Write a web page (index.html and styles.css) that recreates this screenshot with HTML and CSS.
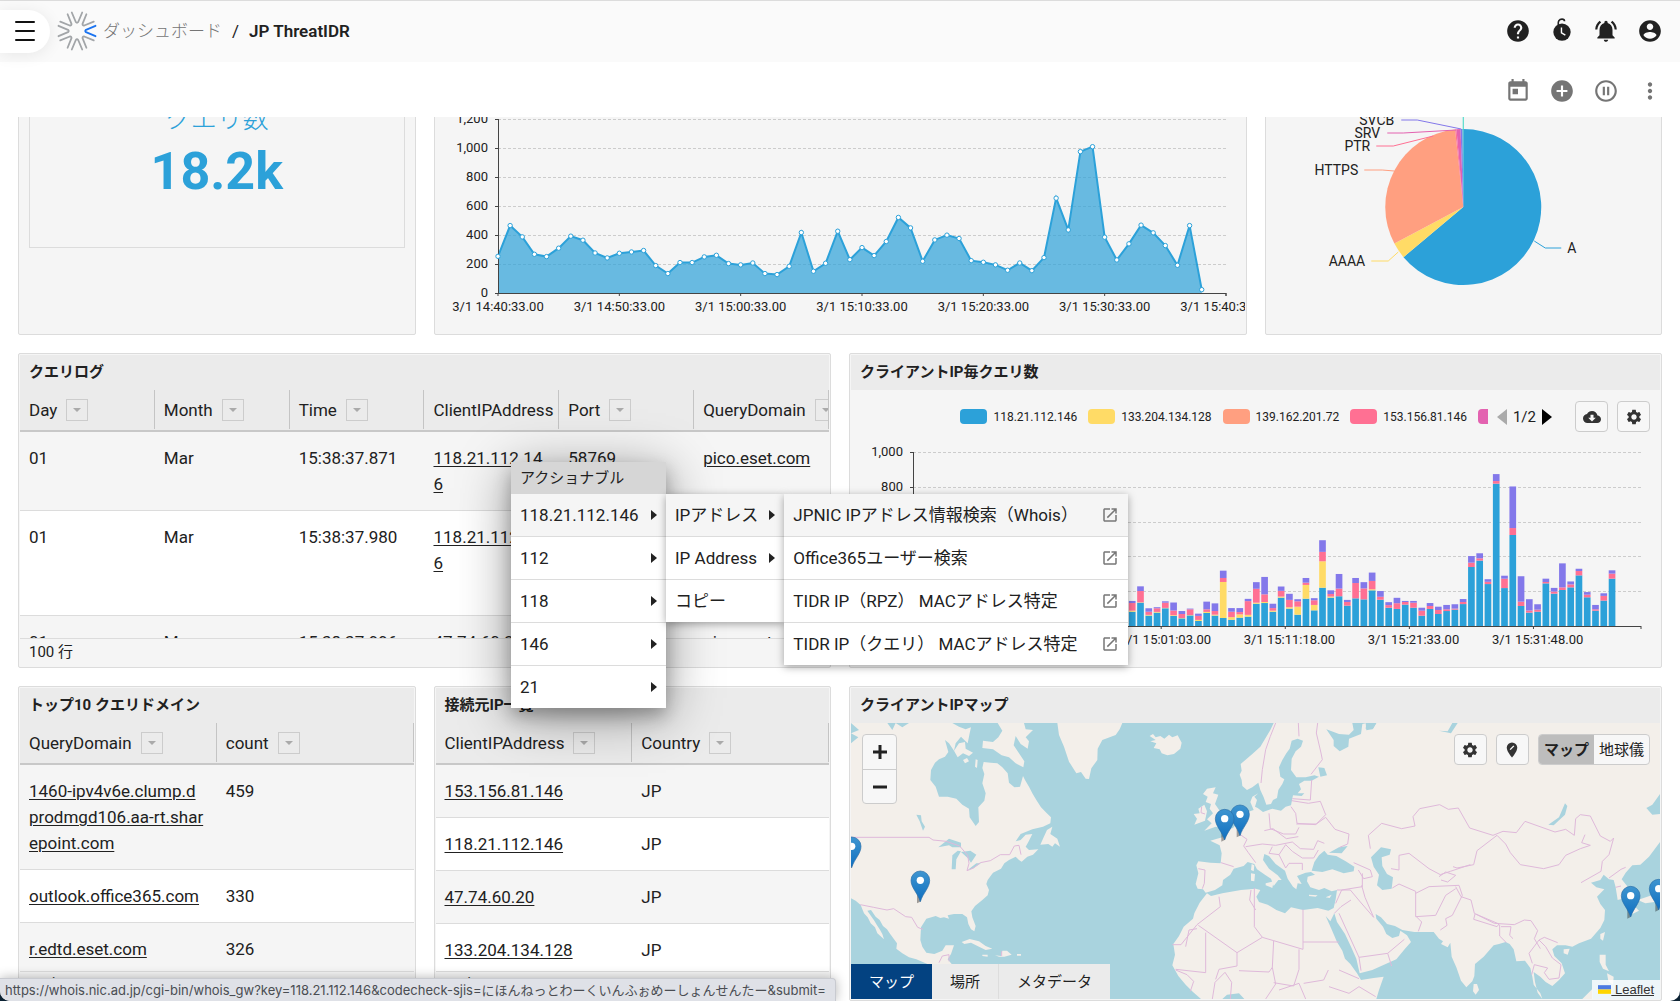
FILE: index.html
```html
<!DOCTYPE html>
<html lang="ja">
<head>
    <meta charset="UTF-8">
    <meta name="viewport" content="width=device-width, initial-scale=1.0">
    <title>ダッシュボード / JP ThreatIDR</title>
    <link rel="stylesheet" href="styles.css">
</head>
<body>
    <!-- Shared icon shapes -->
    <svg class="defs" aria-hidden="true">
        <symbol id="i-gear" viewBox="0 0 24 24"><path d="M19.14 12.94c.04-.3.06-.61.06-.94 0-.32-.02-.64-.07-.94l2.03-1.58c.18-.14.23-.41.12-.61l-1.92-3.32c-.12-.22-.37-.29-.59-.22l-2.39.96c-.5-.38-1.03-.7-1.62-.94l-.36-2.54c-.04-.24-.24-.41-.48-.41h-3.84c-.24 0-.43.17-.47.41l-.36 2.54c-.59.24-1.13.57-1.62.94l-2.39-.96c-.22-.08-.47 0-.59.22L2.74 8.87c-.12.21-.08.47.12.61l2.03 1.58c-.05.3-.09.63-.09.94s.02.64.07.94l-2.03 1.58c-.18.14-.23.41-.12.61l1.92 3.32c.12.22.37.29.59.22l2.39-.96c.5.38 1.03.7 1.62.94l.36 2.54c.05.24.24.41.48.41h3.84c.24 0 .44-.17.47-.41l.36-2.54c.59-.24 1.13-.56 1.62-.94l2.39.96c.22.08.47 0 .59-.22l1.92-3.32c.12-.22.07-.47-.12-.61l-2.01-1.58zM12 15.6c-1.98 0-3.6-1.62-3.6-3.6s1.62-3.6 3.6-3.6 3.6 1.62 3.6 3.6-1.62 3.6-3.6 3.6z"/></symbol>
        <symbol id="i-open" viewBox="0 0 24 24"><path d="M19 19H5V5h7V3H5c-1.11 0-2 .9-2 2v14c0 1.1.89 2 2 2h14c1.1 0 2-.9 2-2v-7h-2v7zM14 3v2h3.59l-9.83 9.83 1.41 1.41L19 6.41V10h2V3h-7z"/></symbol>
        <symbol id="i-arrow" viewBox="0 0 6 10"><path d="M0 0l6 5-6 5z"/></symbol>
        <symbol id="i-down" viewBox="0 0 8 4"><path d="M0 0h8L4 4z"/></symbol>
    </svg>

    <header class="topbar">
        <button class="menu-toggle" aria-label="メニュー">
            <svg width="20" height="20" viewBox="0 0 20 20"><path d="M1 1h18M1 10h18M1 19h18" stroke="#111" stroke-width="2" stroke-linecap="round"/></svg>
        </button>
        <svg class="logo" width="40" height="40" viewBox="-20 -20 40 40" fill="none" stroke="#a2a5a8" stroke-width="1.8" stroke-linecap="round" stroke-linejoin="round">
            <path id="petal" stroke="#1a73f0" d="M18.5-5.2L9-1.2Q7.5 0 9 1.2L18.5 5.2"/>
            <g id="petals"></g>
        </svg>
        <nav class="breadcrumb">
            <a href="#">ダッシュボード</a>
            <span>/</span>
            <strong>JP ThreatIDR</strong>
        </nav>
        <div class="icon-row">
            <button class="icon-button" aria-label="ヘルプ"><svg viewBox="0 0 24 24"><path d="M12 2C6.48 2 2 6.48 2 12s4.48 10 10 10 10-4.48 10-10S17.52 2 12 2zm1 17h-2v-2h2v2zm2.07-7.75l-.9.92C13.45 12.9 13 13.5 13 15h-2v-.5c0-1.1.45-2.1 1.17-2.83l1.24-1.26c.37-.36.59-.86.59-1.41 0-1.1-.9-2-2-2s-2 .9-2 2H8c0-2.21 1.79-4 4-4s4 1.79 4 4c0 .88-.36 1.68-.93 2.25z"/></svg></button>
            <button class="icon-button" aria-label="タイマー"><svg viewBox="0 0 24 24"><circle cx="12" cy="13" r="8"/><path d="M8.6 6.500C8 3 9.500 1 12 1c1.500 0 2.300.7 2.300 1.900" fill="none" stroke="#212121" stroke-width="1.600"/><path d="M11.500 8.800v4.800l3.600 2.200" fill="none" stroke="#fff" stroke-width="1.300"/></svg></button>
            <button class="icon-button" aria-label="通知"><svg viewBox="0 0 24 24"><path d="M7.580 4.080L6.150 2.650C3.750 4.480 2.170 7.300 2.030 10.500h2c.15-2.650 1.510-4.970 3.550-6.420zm12.390 6.420h2c-.15-3.200-1.730-6.020-4.120-7.850l-1.420 1.430c2.020 1.450 3.390 3.770 3.540 6.420zM18 11c0-3.070-1.640-5.640-4.500-6.320V4c0-.83-.67-1.500-1.500-1.500s-1.500.67-1.500 1.500v.68C7.630 5.360 6 7.920 6 11v5l-2 2v1h16v-1l-2-2v-5zm-6 11c.14 0 .27-.01.4-.04.65-.14 1.180-.58 1.440-1.180.1-.24.15-.5.15-.78h-4c.01 1.100.9 2 2.010 2z"/></svg></button>
            <button class="icon-button" aria-label="アカウント"><svg viewBox="0 0 24 24"><path d="M12 2C6.480 2 2 6.480 2 12s4.480 10 10 10 10-4.480 10-10S17.520 2 12 2zm0 3c1.660 0 3 1.340 3 3s-1.340 3-3 3-3-1.340-3-3 1.340-3 3-3zm0 14.200c-2.500 0-4.710-1.280-6-3.220.03-1.990 4-3.080 6-3.080 1.990 0 5.970 1.090 6 3.080-1.290 1.940-3.500 3.220-6 3.220z"/></svg></button>
        </div>
    </header>

    <div class="toolbar">
        <div class="icon-row muted">
            <button class="icon-button" aria-label="期間"><svg viewBox="0 0 24 24"><path d="M19 3h-1V1h-2v2H8V1H6v2H5c-1.110 0-1.990.9-1.990 2L3 19c0 1.100.89 2 2 2h14c1.100 0 2-.9 2-2V5c0-1.100-.9-2-2-2zm0 16H5V8h14v11zM7 10h5v5H7z"/></svg></button>
            <button class="icon-button" aria-label="追加"><svg viewBox="0 0 24 24"><path d="M12 2C6.480 2 2 6.480 2 12s4.480 10 10 10 10-4.480 10-10S17.520 2 12 2zm5 11h-4v4h-2v-4H7v-2h4V7h2v4h4v2z"/></svg></button>
            <button class="icon-button" aria-label="一時停止"><svg viewBox="0 0 24 24"><path d="M9 16h2V8H9v8zm3-14C6.480 2 2 6.480 2 12s4.480 10 10 10 10-4.480 10-10S17.520 2 12 2zm0 18c-4.410 0-8-3.590-8-8s3.590-8 8-8 8 3.590 8 8-3.590 8-8 8zm1-4h2V8h-2v8z"/></svg></button>
            <button class="icon-button" aria-label="その他"><svg viewBox="0 0 24 24"><path d="M12 8c1.100 0 2-.9 2-2s-.9-2-2-2-2 .9-2 2 .9 2 2 2zm0 2c-1.100 0-2 .9-2 2s.9 2 2 2 2-.9 2-2-.9-2-2-2zm0 6c-1.100 0-2 .9-2 2s.9 2 2 2 2-.9 2-2-.9-2-2-2z"/></svg></button>
        </div>
    </div>

    <main class="dashboard" id="dashboard">
        <section class="card">
            <h2>クエリ数</h2>
            <div class="metric">
                <span class="metric-label">クエリ数</span>
                <span class="metric-value">18.2k</span>
            </div>
        </section>

        <section class="card wide">
            <h2>クエリ数</h2>
            <svg class="chart" id="areaChart"></svg>
        </section>

        <section class="card">
            <h2>クエリ数</h2>
            <svg class="chart pie" viewBox="0 0 393 276" preserveAspectRatio="xMidYMax meet">
                <g id="pieSlices"></g>
                <g fill="none">
                    <path stroke="#2ca1d9" d="M267 184l11 7h16"/>
                    <path stroke="#ffdb66" d="M131 195l-10 9h-17"/>
                    <path stroke="#ff9f80" d="M127 114l-12-1H97"/>
                    <path stroke="#ff7093" d="M166 79l-40 10h-17"/>
                    <path stroke="#e362b0" d="M189 73l-53 3h-16"/>
                    <path stroke="#8378ea" d="M194 72l-44-9h-16"/>
                    <path stroke="#38d6c4" d="M196 73V40"/>
                </g>
                <g class="pie-labels">
                    <text x="300" y="196">A</text>
                    <text x="98" y="209" text-anchor="end">AAAA</text>
                    <text x="91" y="118" text-anchor="end">HTTPS</text>
                    <text x="103" y="94" text-anchor="end">PTR</text>
                    <text x="113" y="81" text-anchor="end">SRV</text>
                    <text x="127" y="68" text-anchor="end">SVCB</text>
                </g>
            </svg>
        </section>

        <section class="card wide">
            <h2>クエリログ</h2>
            <div class="table-scroll">
                <table>
                    <thead>
                        <tr>
                            <th><div>Day<button aria-label="Day"><svg><use href="#i-down"/></svg></button></div></th>
                            <th><div>Month<button aria-label="Month"><svg><use href="#i-down"/></svg></button></div></th>
                            <th><div>Time<button aria-label="Time"><svg><use href="#i-down"/></svg></button></div></th>
                            <th><div>ClientIPAddress<button aria-label="ClientIPAddress"><svg><use href="#i-down"/></svg></button></div></th>
                            <th><div>Port<button aria-label="Port"><svg><use href="#i-down"/></svg></button></div></th>
                            <th><div>QueryDomain<button aria-label="QueryDomain"><svg><use href="#i-down"/></svg></button></div></th>
                        </tr>
                    </thead>
                    <tbody>
                        <tr><td>01</td><td>Mar</td><td>15:38:37.871</td><td><a href="#">118.21.112.146</a></td><td>58769</td><td><a href="#">pico.eset.com</a></td></tr>
                        <tr><td>01</td><td>Mar</td><td>15:38:37.980</td><td><a href="#">118.21.112.146</a></td><td>58770</td><td><a href="#">prodmgd106.aa-rt.sharepoint.com</a></td></tr>
                        <tr><td>01</td><td>Mar</td><td>15:38:37.996</td><td><a href="#">47.74.60.20</a></td><td>58771</td><td><a href="#">pico.eset.com</a></td></tr>
                    </tbody>
                </table>
            </div>
            <footer>100 行</footer>
        </section>

        <section class="card wide">
            <h2>クライアントIP毎クエリ数</h2>
            <div class="chart-head">
                <ul class="legend">
                    <li class="c-blue">118.21.112.146</li>
                    <li class="c-yellow">133.204.134.128</li>
                    <li class="c-orange">139.162.201.72</li>
                    <li class="c-pink">153.156.81.146</li>
                    <li class="c-magenta cut"></li>
                </ul>
                <div class="pager">
                    <button class="prev" aria-label="前へ" disabled><svg viewBox="0 0 10 16"><path d="M10 0v16L0 8z"/></svg></button>
                    <span>1/2</span>
                    <button aria-label="次へ"><svg viewBox="0 0 10 16"><path d="M0 0v16l10-8z"/></svg></button>
                </div>
                <button class="tool" aria-label="ダウンロード"><svg viewBox="0 0 24 24"><path d="M19.350 10.040C18.670 6.590 15.640 4 12 4 9.110 4 6.600 5.640 5.350 8.040 2.340 8.360 0 10.910 0 14c0 3.310 2.690 6 6 6h13c2.760 0 5-2.240 5-5 0-2.640-2.050-4.780-4.650-4.960zM17 13l-5 5-5-5h3V9h4v4h3z"/></svg></button>
                <button class="tool" aria-label="設定"><svg><use href="#i-gear"/></svg></button>
            </div>
            <svg class="chart" id="barChart"></svg>
        </section>

        <section class="card">
            <h2>トップ10 クエリドメイン</h2>
            <div class="table-scroll">
                <table>
                    <thead>
                        <tr>
                            <th><div>QueryDomain<button aria-label="QueryDomain"><svg><use href="#i-down"/></svg></button></div></th>
                            <th><div>count<button aria-label="count"><svg><use href="#i-down"/></svg></button></div></th>
                        </tr>
                    </thead>
                    <tbody>
                        <tr><td><a href="#">1460-ipv4v6e.clump.d<br>prodmgd106.aa-rt.sharepoint.com</a></td><td>459</td></tr>
                        <tr><td><a href="#">outlook.office365.com</a></td><td>330</td></tr>
                        <tr><td><a href="#">r.edtd.eset.com</a></td><td>326</td></tr>
                    </tbody>
                </table>
            </div>
            <footer>10 行</footer>
        </section>

        <section class="card">
            <h2>接続元IP一覧</h2>
            <div class="table-scroll">
                <table>
                    <thead>
                        <tr>
                            <th><div>ClientIPAddress<button aria-label="ClientIPAddress"><svg><use href="#i-down"/></svg></button></div></th>
                            <th><div>Country<button aria-label="Country"><svg><use href="#i-down"/></svg></button></div></th>
                        </tr>
                    </thead>
                    <tbody>
                        <tr><td><a href="#">153.156.81.146</a></td><td>JP</td></tr>
                        <tr><td><a href="#">118.21.112.146</a></td><td>JP</td></tr>
                        <tr><td><a href="#">47.74.60.20</a></td><td>JP</td></tr>
                        <tr><td><a href="#">133.204.134.128</a></td><td>JP</td></tr>
                    </tbody>
                </table>
            </div>
            <footer>10 行</footer>
        </section>

        <section class="card wide">
            <h2>クライアントIPマップ</h2>
            <div class="map">
                <svg class="map-canvas" viewBox="36 129 2427 828" preserveAspectRatio="xMidYMid slice">
                    <defs>
                        <linearGradient id="pinFill" x1="0" y1="0" x2="0" y2="1">
                            <stop offset="0" stop-color="#3f95d0"/>
                            <stop offset="1" stop-color="#0f6fc0"/>
                        </linearGradient>
                        <g id="pin">
                            <path d="M-10 5L-10-34L6-20L0 0z" fill="#000" opacity=".35"/>
                            <path d="M0 0C-8-26-28-42-28-64a28 28 0 0 1 56 0C28-42 8-26 0 0z" fill="url(#pinFill)" stroke="#2a6ea8" stroke-width="2"/>
                            <circle cy="-64" r="11" fill="#fff"/>
                        </g>
                    </defs>
                    <g class="land">
                        <!-- North and Central America -->
                        <path d="M36 129L60 150 36 160 58 172 36 190V655L50 662 65 675 75 700 86 712 95 730 108 742 115 760 135 778 130 762 122 748 114 736 106 722 96 708 85 692 96 690 110 710 122 720 132 738 144 748 152 760 164 776 174 790 172 806 190 820 210 832 232 838 260 850 300 868 332 870 338 852 326 838 336 822 345 796 320 796 310 812 286 822 262 818 250 800 244 780 246 742 262 716 290 708 304 714 315 712 330 716 326 706 345 702 370 702 384 712 388 732 396 748 406 754 410 738 400 712 397 694 408 678 430 660 446 646 450 630 442 612 446 600 462 578 486 566 496 550 510 540 530 530 540 540 548 545 565 530 582 524 598 508 570 510 560 500 568 486 580 462 560 464 545 480 530 484 545 462 580 448 612 440 634 430 636 412 622 398 606 382 592 360 580 340 570 320 558 300 552 288 543 320 526 322 510 308 506 280 490 262 475 250 455 248 434 246 430 264 436 282 430 310 440 340 436 362 418 382 420 426 410 438 392 412 390 386 370 374 352 356 326 350 300 350 290 320 274 300 276 270 288 248 300 238 318 230 328 216 318 180 330 190 345 212 350 190 366 170 386 190 392 160 396 142 380 148 360 140 340 129 210 129 190 142 170 129 160 150 145 129z"/>
                        <!-- Baffin Island and the arctic islands -->
                        <path d="M476 129L490 152 478 172 462 186 432 182 430 204 462 208 488 226 510 232 530 250 553 262 556 244 540 220 524 196 530 168 545 192 566 206 570 184 560 172 582 150 560 148 555 129z"/>
                        <path d="M345 212L360 190 378 186 380 206 402 218 390 228 372 220 356 232zM372 240l12-6 6 10-12 6zM410 238l6 2-2 24-6-4z"/>
                        <path d="M640 440L634 462 655 476 663 500 648 490 640 500 628 492 604 494 614 472 624 450z"/>
                        <path d="M655 129L660 165 675 200 690 245 712 280 726 276 740 296 750 297 757 265 775 240 776 206 790 180 830 165 842 148 850 129z"/>
                        <path d="M932 168L950 180 934 184 952 190 944 204 962 208 968 220 985 226 1005 222 1024 206 1028 188 1016 166 1000 172 990 164 976 176 964 168 950 172 942 162z"/>
                        <path d="M368 786L392 777 420 784 440 798 460 806 440 810 420 800 396 788 376 792zM468 826L486 828 490 812 504 812 518 824 496 830 480 830zM430 824l16 0 0 6-16-2zM534 822h12v5h-12z"/>
                        <!-- British Isles -->
                        <path d="M1104 326L1130 322 1122 340 1138 344 1128 372 1142 392 1150 408 1165 418 1150 444 1130 440 1096 452 1118 430 1104 418 1122 400 1112 386 1116 372 1100 366 1106 350 1092 342z"/>
                        <path d="M1078 386L1096 374 1104 394 1098 422 1066 434 1074 416 1064 402 1082 400z"/>
                        <!-- Europe, Asia and Africa -->
                        <path d="M1304 129L1294 150 1282 170 1264 200 1240 222 1205 252 1208 272 1202 284 1208 300 1210 318 1224 330 1240 322 1258 308 1264 330 1274 352 1282 374 1296 372 1302 360 1314 354 1318 330 1330 312 1336 298 1324 290 1320 262 1330 240 1342 220 1352 206 1358 182 1376 176 1392 182 1386 200 1370 214 1358 236 1356 270 1372 292 1400 292 1426 286 1440 290 1418 302 1396 302 1380 312 1386 328 1376 340 1396 340 1388 348 1362 346 1356 376 1340 380 1326 392 1300 386 1272 396 1256 384 1248 380 1254 360 1246 350 1258 340 1240 350 1234 366 1244 390 1226 396 1208 408 1196 430 1182 444 1164 450 1156 470 1134 476 1114 482 1142 496 1148 520 1145 550 1114 548 1078 544 1072 556 1078 580 1070 612 1076 626 1092 628 1100 638 1128 630 1150 616 1152 600 1174 584 1184 566 1214 558 1226 546 1246 552 1254 568 1280 586 1296 596 1304 618 1318 600 1328 600 1316 586 1290 566 1272 540 1276 522 1290 528 1310 552 1338 572 1346 596 1362 620 1372 628 1376 610 1388 612 1374 588 1400 578 1416 576 1428 584 1406 590 1404 604 1414 622 1440 630 1456 624 1478 634 1494 630 1490 658 1484 684 1468 692 1436 684 1392 690 1356 682 1338 700 1312 690 1286 674 1260 666 1252 650 1264 630 1250 626 1206 630 1150 640 1116 648 1104 640 1082 668 1066 700 1062 716 1034 740 1020 768 1003 792 1008 824 1000 856 1018 888 1040 914 1062 936 1086 957H1150L1164 944 1200 940 1216 957H1612L1620 930 1634 890 1604 894 1566 900 1554 880 1534 852 1518 836 1510 812 1494 786 1476 744 1460 708 1474 724 1486 700 1494 726 1518 762 1536 800 1552 836 1562 880 1600 870 1640 852 1672 838 1698 806 1716 786 1704 766 1684 752 1680 768 1660 774 1642 762 1632 740 1612 716 1610 702 1626 712 1644 732 1668 738 1690 750 1726 756 1784 756 1800 776 1812 784 1806 792 1826 802 1834 788 1838 830 1852 862 1866 902 1882 922 1900 904 1906 888 1908 852 1934 830 1964 796 1980 792 2000 786 2012 792 2024 808 2032 844 2058 842 2074 864 2080 890 2084 914 2104 940 2110 957 2096 938 2088 906 2084 876 2104 890 2120 906 2140 918 2160 900 2178 880 2168 850 2146 828 2140 808 2154 796 2180 796 2200 800 2220 790 2256 776 2284 744 2296 720 2298 690 2284 672 2274 650 2296 628 2272 622 2256 608 2284 600 2294 584 2310 598 2324 600 2330 622 2336 660 2366 652 2366 620 2348 598 2360 578 2380 556 2404 554 2430 530 2463 486V402L2440 404 2422 384 2440 374 2463 342V129H1612L1600 148 1580 146 1582 129 1570 132 1566 162 1530 176 1528 200 1502 214 1484 198 1484 180 1462 148 1500 162 1530 164 1544 150 1540 129z"/>
                        <path d="M1280 610l24-6-4 20-20-8zM1238 552l8 4-2 18-8-4zM1236 580l12 2-2 22-10-2zM1410 644l26 2-6 4-20-2zM1460 652l18-8-6 10z"/>
                        <path d="M1904 912L1914 912 1920 930 1910 944 1902 934zM2174 808l18-2-6 18-12-4zM2284 762l14-6-6 26-8-6zM2282 824l18 0 0 30 10 20-18-8-10-20zM2304 880l20 10-2 24-14-10zM2370 690l18-10 12 12-20 10zM2396 660l60-20 7 4v20l-44 6z"/>
                        <path d="M2230 957l30-30v30z"/>
                    </g>
                    <g class="water">
                        <path d="M232 404L246 406 248 424 258 440 252 452 242 424z"/>
                        <path d="M298 502L330 476 366 488 366 502 340 502 330 496zM338 568L340 526 356 512 366 514 352 538 350 568zM366 516L394 512 412 524 396 548 386 534zM386 570L412 550 426 550 400 566z"/>
                        <path d="M1418 572L1426 546 1440 526 1456 512 1466 524 1492 528 1520 544 1546 560 1544 574 1514 580 1480 568 1450 576zM1470 518L1500 502 1526 498 1508 520z"/>
                        <path d="M1596 532L1626 502 1656 508 1652 524 1628 532 1630 558 1644 582 1662 592 1658 626 1630 630 1614 616 1620 584 1604 560z"/>
                        <path d="M2128 434L2160 412 2178 370 2185 378 2178 404 2144 436zM1438 262l18 2 8 22-20 4zM1580 129h32l-10 18-20 4z"/>
                        <path d="M1800 152L1826 154 1840 129 1856 129 1836 160z"/>
                    </g>
                    <g class="borders">
                        <path d="M36 472H270l12 8 40 4 40 14 24 28 4 24 -6 22 20-8 20-16 30-6 30-18 28 0 14-26 14-2 6 28M64 674l40 8 40 8 20-4 36 24 18 2 18 30 16 6M300 848l10-20 20-4 0 20M488 814v14M1088 380l-2 18 12 4"/>
                        <path d="M1310 129l-16 40-14 40-10 60-4 40M1378 129l2 40M1436 129l-4 30 14 60 4 20-34 44M1418 300l-4 60-54-4M1358 362l50 8 36-6 16 40-30 30-56-4-4-30-14-20M1290 400l4 46 40 16 36 0 10-20M1276 452l26-6 40 30 36-6M1220 500l50-8 40 4 50-10 24 20 40 2 12-26 20 8M1250 548l-22-30-14-20 10-20-20-14M1146 548l38 12M1078 566l20 4-2 40-6 16M1372 432l60 0 28-20 28 36 42 14-4 30-24 10M1300 500l-10 20 30 4 20-30 20 20 30 20 34 0 14-24M1320 524l20 40 10-14 40 0 0 20M1544 548l50 22 6 20-26 6-16-26M1570 580v40l-62 10-18 40M1494 630l40 0 30 36 40 46M1486 700l20-20 30-20M1604 712l-26-60-10-36M1594 506l-6-40 40-36 60 16 40-8-6-28 20-24 60-12 26 14 30-4 34 60 70 22 30-12 40 4 26-34 90 32 32-8 26 18 4-50 14-12 30 4 30 60 30 16 10-10-14 50-20 20-4 30-60 34"/>
                        <path d="M1974 466l26 26 14 26 30 36 70 12 46-12 20-28 44-20 30-10-26-8 10-24M1974 466l-60 46-10 42-50 10-12-4M1680 570v-44l30-6 60 46 34 18 30-10 60-20M1680 570l-24-4M1660 624l20-12 50 22 0 76 60-4 30-60 30-20M1730 640l40-20 90-4 10 30-30 60-20 10 4 20-20 14M1732 710l16 16-10 28M1800 590l20-14 30 10-24 20-20-6M1850 620l16 30 30 10 10 40 60 30 60 4 30-14 20 2 20 30-10 24 18 30M1908 702l-4 16 70 22 6-8-70-30M1982 734l0 34 20 20M1986 740l30 0-4 26 10 10M2080 850l-10-30 30-40 20 20 20 34 26 20-6 40-30 4-14-20 10-14-40-10-8 30M2100 780l16-8 40 16M2310 594l36-26 14-6M2330 622l16-4"/>
                        <path d="M1500 700l60 132 86-12 12 38M1646 820l50-42M1560 832l6 40"/>
                        <path d="M1140 650l4 30-70 54-48 60h-26M1078 736l116 82 76-46-24-32v-116M1100 758v120l-90-10M1194 818v40l-54 10-10 30M1270 772l34 10-4 80-10 14-90-4M1304 782l88 26v-120M1392 786h108M1380 808v60l-16 50-60-10M1300 862l10 50-30 45M1040 800l10-50 24-4M1010 870l34 14 20 20-10 30M1120 957l8-50 30-30 20 30-4 50M1394 910l60-10 14-30M1500 870l60 26M1470 920l60 20 30-20 50 30M1320 930l60-20 20 47M1236 630l-4 30 18 30"/>
                    </g>
                    <use href="#pin" x="38" y="563"/>
                    <use href="#pin" x="244" y="665"/>
                    <use href="#pin" x="1203" y="467"/>
                    <use href="#pin" x="1157" y="480"/>
                    <use href="#pin" x="2375" y="711"/>
                    <use href="#pin" x="2459" y="690"/>
                </svg>
                <div class="map-zoom">
                    <button aria-label="拡大"><svg viewBox="0 0 14 14"><path d="M7 0v14M0 7h14"/></svg></button>
                    <button aria-label="縮小"><svg viewBox="0 0 14 14"><path d="M0 7h14"/></svg></button>
                </div>
                <div class="map-tools">
                    <button class="tool" aria-label="設定"><svg><use href="#i-gear"/></svg></button>
                    <button class="tool" aria-label="ピン"><svg viewBox="0 0 24 24"><path d="M12 2a7 7 0 0 0-7 7c0 5.300 7 13 7 13s7-7.700 7-13a7 7 0 0 0-7-7z"/><path d="M9.500 11.500l5-5" stroke="#fff" stroke-width="1.800"/></svg></button>
                    <div class="toggle">
                        <button class="active">マップ</button>
                        <button>地球儀</button>
                    </div>
                </div>
                <div class="map-tabs">
                    <button class="active">マップ</button>
                    <button>場所</button>
                    <button>メタデータ</button>
                </div>
                <div class="attribution">
                    <a href="#"><svg width="13" height="9" viewBox="0 0 12 8"><path fill="#4c7be1" d="M0 0h12v4H0z"/><path fill="#ffd500" d="M0 4h12v4H0z"/></svg> Leaflet</a>
                </div>
            </div>
        </section>
    </main>

    <!-- Actionable menu, opened on a client IP -->
    <div class="menus">
        <div class="menu root">
            <p>アクショナブル</p>
            <button class="active">118.21.112.146<svg><use href="#i-arrow"/></svg></button>
            <button>112<svg><use href="#i-arrow"/></svg></button>
            <button>118<svg><use href="#i-arrow"/></svg></button>
            <button>146<svg><use href="#i-arrow"/></svg></button>
            <button>21<svg><use href="#i-arrow"/></svg></button>
        </div>
        <div class="menu">
            <button class="active">IPアドレス<svg><use href="#i-arrow"/></svg></button>
            <button>IP Address<svg><use href="#i-arrow"/></svg></button>
            <button>コピー</button>
        </div>
        <div class="menu links">
            <a class="active" href="#">JPNIC IPアドレス情報検索（Whois）<svg><use href="#i-open"/></svg></a>
            <a href="#">Office365ユーザー検索<svg><use href="#i-open"/></svg></a>
            <a href="#">TIDR IP（RPZ） MACアドレス特定<svg><use href="#i-open"/></svg></a>
            <a href="#">TIDR IP（クエリ） MACアドレス特定<svg><use href="#i-open"/></svg></a>
        </div>
    </div>

    <div class="status">https://whois.nic.ad.jp/cgi-bin/whois_gw?key=118.21.112.146&amp;codecheck-sjis=にほんねっとわーくいんふぉめーしょんせんたー&amp;submit=</div>

    <script src="script.js"></script>
</body>
</html>
```

FILE: styles.css
```css
:root {
    --blue: #2ca1d9;
    --yellow: #ffdb66;
    --orange: #ff9f80;
    --pink: #ff7093;
    --magenta: #e362b0;
    --text: #212121;
    --line: #dcdcdc;
    --panel: #f5f5f5;
    --head: #ebebeb;
}

* {
    box-sizing: border-box;
}

html {
    background: #0c2233;
}

body {
    position: relative;
    display: flex;
    flex-direction: column;
    height: 100vh;
    margin: 0;
    overflow: hidden;
    background: white;
    border-radius: 0 0 10px 10px;
    color: var(--text);
    font: 17px/26px Roboto, "Noto Sans CJK JP", sans-serif;
}

button {
    margin: 0;
    padding: 0;
    border: 0;
    background: none;
    color: inherit;
    font: inherit;
    cursor: pointer;
}

a {
    color: inherit;
}

svg {
    display: block;
}

.defs {
    position: absolute;
    width: 0;
    height: 0;
}

/* Top bar */
.topbar {
    display: flex;
    align-items: center;
    height: 62px;
    flex: none;
    padding: 0 17px 1px 0;
    background: #fafafa;
    border-top: 1px solid #dcdcdc;
}

.menu-toggle {
    display: flex;
    align-items: center;
    width: 50px;
    height: 43px;
    padding-left: 15px;
    background: white;
    border-radius: 0 22px 22px 0;
    box-shadow: 0 2px 16px rgba(0, 0, 0, 0.08);
}

.logo {
    margin: 0 6px 0 7px;
}

.breadcrumb {
    display: flex;
    gap: 10px;
}

.breadcrumb a {
    color: #757575;
    font-weight: 300;
    text-decoration: none;
}

.breadcrumb strong {
    font-weight: 600;
}

.icon-row {
    display: flex;
    gap: 18px;
    margin-left: auto;
    fill: #212121;
}

.icon-row.muted {
    fill: #757575;
}

.icon-button svg {
    width: 26px;
    height: 26px;
}

.toolbar {
    display: flex;
    align-items: center;
    height: 55px;
    flex: none;
    padding: 2px 17px 0 0;
}

/* Dashboard */
.dashboard {
    display: grid;
    grid-template-columns: repeat(4, minmax(0, 1fr));
    grid-auto-rows: 315px;
    gap: 18px;
    flex: 1;
    min-height: 0;
    padding: 0 18px 18px;
    overflow-y: auto;
    scrollbar-width: none;
}

.card {
    display: flex;
    flex-direction: column;
    min-width: 0;
    padding: 1px;
    overflow: hidden;
    background: var(--panel);
    border: 1px solid var(--line);
    border-radius: 2px;
}

.wide {
    grid-column: span 2;
}

.card h2 {
    margin: 0;
    padding: 4px 9px 5px;
    background: var(--head);
    font-size: 15px;
    font-weight: 700;
}

.card footer {
    padding: 0 9px 1px;
    border-top: 1px solid var(--line);
    font-size: 15px;
}

.metric {
    display: flex;
    flex-direction: column;
    align-items: center;
    height: 182px;
    margin: 9px;
    padding: 32px 0;
    border: 1px solid var(--line);
    color: var(--blue);
}

.metric-label {
    font-size: 26px;
    font-weight: 300;
    line-height: 40px;
}

.metric-value {
    font-size: 52px;
    font-weight: 700;
    line-height: 66px;
}

/* Charts */
.chart {
    flex: 1;
    width: 100%;
    min-height: 0;
    font-size: 13px;
}

.chart text {
    fill: var(--text);
}

.pie-labels {
    font-size: 14px;
}

.chart .grid {
    stroke: #ccc;
    stroke-dasharray: 3 2;
}

.chart .axis {
    stroke: #444;
}

.chart-head {
    display: flex;
    align-items: center;
    gap: 9px;
    padding: 11px 10px 0;
}

.legend {
    display: flex;
    gap: 11px;
    margin: 0 0 0 auto;
    padding: 0;
    list-style: none;
    font-size: 12px;
}

.legend li {
    display: flex;
    align-items: center;
    gap: 6px;
}

.legend li::before {
    content: "";
    width: 27px;
    height: 15px;
    border-radius: 4px;
    background: var(--swatch);
}

.legend .cut::before {
    width: 10px;
    border-radius: 4px 0 0 4px;
}

.c-blue { --swatch: var(--blue); }
.c-yellow { --swatch: var(--yellow); }
.c-orange { --swatch: var(--orange); }
.c-pink { --swatch: var(--pink); }
.c-magenta { --swatch: var(--magenta); }

.pager {
    display: flex;
    align-items: center;
    gap: 6px;
    margin-right: 14px;
    font-size: 15px;
}

.pager svg {
    width: 10px;
    height: 16px;
}

.pager .prev {
    fill: #aaa;
}

.tool {
    display: flex;
    align-items: center;
    justify-content: center;
    width: 33px;
    height: 31px;
    background: #f7f7f7;
    border: 1px solid #ccc;
    border-radius: 4px;
}

.tool svg {
    width: 18px;
    height: 18px;
    fill: #333;
}

/* Tables */
.table-scroll {
    flex: 1;
    min-height: 0;
    overflow: hidden;
}

table {
    width: 100%;
    table-layout: fixed;
    border-collapse: separate;
    border-spacing: 0;
}

th {
    padding: 0 0 1px;
    background: var(--head);
    border-bottom: 2px solid #c8c8c8;
    font-weight: 400;
    text-align: left;
}

th div {
    display: flex;
    align-items: center;
    gap: 9px;
    height: 39px;
    padding-left: 9px;
    overflow: hidden;
    border-right: 1px solid #c4c4c4;
}

th button {
    display: flex;
    align-items: center;
    justify-content: center;
    flex: none;
    width: 22px;
    height: 22px;
    border: 1px solid #ccc;
}

th button svg {
    width: 8px;
    height: 4px;
    fill: #aaa;
}

td {
    padding: 13px 9px;
    border-bottom: 1px solid var(--line);
    vertical-align: top;
    word-break: break-all;
}

td a {
    text-decoration-thickness: 1px;
    text-underline-offset: 2px;
}

tbody tr:nth-child(even) {
    background: white;
}

/* Map */
.map {
    position: relative;
    flex: 1;
    min-height: 0;
    overflow: hidden;
    background: #a9d3de;
}

.map-canvas {
    width: 100%;
    height: 100%;
}

.land {
    fill: #f3efea;
}

.water {
    fill: #a9d3de;
}

.borders {
    fill: none;
    stroke: #dfb9da;
    stroke-width: 3;
    stroke-linejoin: round;
}

.map-zoom {
    position: absolute;
    top: 11px;
    left: 11px;
    width: 35px;
    background: #f7f7f7;
    border: 1px solid #ccc;
    border-radius: 4px;
}

.map-zoom button {
    display: flex;
    align-items: center;
    justify-content: center;
    width: 100%;
    height: 34px;
}

.map-zoom button + button {
    border-top: 1px solid #ccc;
}

.map-zoom svg {
    width: 14px;
    height: 14px;
    stroke: #222;
    stroke-width: 3;
}

.map-tools {
    position: absolute;
    top: 11px;
    right: 10px;
    display: flex;
    gap: 9px;
}

.toggle {
    display: flex;
    height: 31px;
    overflow: hidden;
    background: #f7f7f7;
    border: 1px solid #ccc;
    border-radius: 4px;
    font-size: 15px;
}

.toggle button {
    padding: 0 5px;
}

.toggle .active {
    background: #bdbdbd;
    font-weight: 700;
}

.map-tabs {
    position: absolute;
    bottom: 0;
    left: 0;
    display: flex;
    height: 35px;
    background: var(--head);
    font-size: 15px;
}

.map-tabs button {
    padding: 0 18px;
}

.map-tabs button + button + button {
    border-left: 1px solid #ddd;
}

.map-tabs .active {
    background: #034281;
    color: white;
}

.attribution {
    position: absolute;
    right: 0;
    bottom: 0;
    padding: 0 6px;
    background: rgba(255, 255, 255, 0.8);
    color: #333;
    font: 13px/19px "Liberation Sans", sans-serif;
}

.attribution svg {
    display: inline-block;
}

/* Actionable menu */
.menus {
    position: absolute;
    top: 462px;
    left: 511px;
    display: flex;
    align-items: flex-start;
}

.menu {
    margin-top: 32px;
    background: white;
    box-shadow: 0 2px 8px rgba(0, 0, 0, 0.35);
}

.menu.root {
    width: 155px;
    margin-top: 0;
    box-shadow: 0 8px 16px rgba(0, 0, 0, 0.25), 0 8px 50px rgba(0, 0, 0, 0.4);
}

.menu p {
    height: 32px;
    margin: 0;
    padding: 3px 9px;
    background: #d6d6d6;
    font-size: 15px;
}

.menu button,
.menu a {
    display: flex;
    align-items: center;
    justify-content: space-between;
    gap: 11px;
    width: 100%;
    padding: 8px 9px;
    border-bottom: 1px solid var(--line);
    text-decoration: none;
    white-space: nowrap;
}

.menu > :last-child {
    border-bottom: 0;
}

.menu .active {
    background: #f5f5f5;
}

.menu svg {
    width: 6px;
    height: 10px;
    fill: #222;
}

.menu a {
    gap: 23px;
}

.menu a svg {
    width: 18px;
    height: 18px;
    fill: #777;
}

/* Link target shown by the browser */
.status {
    position: absolute;
    bottom: 0;
    left: 0;
    height: 23px;
    padding: 0 9px 0 5px;
    background: #dfe1e7;
    border: 1px solid #c8cad0;
    border-width: 1px 1px 0 0;
    border-radius: 0 4px 0 0;
    box-shadow: 0 0 12px rgba(0, 0, 0, 0.3);
    color: #4a4d52;
    font: 13px/22px Inter, "Noto Sans CJK JP", sans-serif;
    white-space: nowrap;
}
```

FILE: script.js
```js
const NS = 'http://www.w3.org/2000/svg';
const PLOT = { left: 62, right: 19, bottom: 40, height: 174 };

function add(parent, tag, attrs, text) {
    const el = document.createElementNS(NS, tag);
    for (const key in attrs) el.setAttribute(key, attrs[key]);
    if (text !== undefined) el.textContent = text;
    parent.appendChild(el);
    return el;
}

// Axes, grid lines and labels shared by both time charts
function drawFrame(svg, max, ticks, labelShift) {
    const x0 = PLOT.left;
    const x1 = svg.clientWidth - PLOT.right;
    const y0 = Math.round(svg.clientHeight - PLOT.bottom);
    for (let v = 0; v <= max; v += 200) {
        const y = Math.round(y0 - v / max * PLOT.height) + 0.5;
        if (v > 0) add(svg, 'line', { class: 'grid', x1: x0, x2: x1, y1: y, y2: y });
        add(svg, 'line', { class: 'axis', x1: x0 - 3, x2: x0, y1: y, y2: y });
        add(svg, 'text', { x: x0 - 10, y: y + 3, 'text-anchor': 'end' }, v.toLocaleString('en-US'));
    }
    ticks.forEach(tick => {
        const x = x0 + tick.at * (x1 - x0);
        add(svg, 'line', { class: 'axis', x1: x, x2: x, y1: y0, y2: y0 + 3 });
        add(svg, 'text', { x: x + labelShift, y: y0 + 18, 'text-anchor': 'middle' }, '3/1 ' + tick.label + '.00');
    });
    return { x0, x1, y0, scale: PLOT.height / max };
}

function drawAxis(svg, f, max) {
    add(svg, 'line', { class: 'axis', x1: f.x0 + 0.5, x2: f.x0 + 0.5, y1: f.y0 - max * f.scale, y2: f.y0 });
    add(svg, 'line', { class: 'axis', x1: f.x0, x2: f.x1, y1: f.y0 + 0.5, y2: f.y0 + 0.5 });
    add(svg, 'line', { class: 'axis', x1: f.x1, x2: f.x1, y1: f.y0, y2: f.y0 + 3 });
}

// Queries per minute
const queries = [
    253, 465, 387, 267, 251, 309, 392, 364, 276, 242, 274, 283, 293, 189, 134, 210, 210, 249, 260, 203,
    194, 207, 134, 127, 184, 417, 150, 205, 426, 230, 313, 258, 355, 521, 449, 219, 366, 399, 376, 223,
    212, 194, 157, 207, 154, 244, 654, 435, 975, 1009, 385, 228, 339, 468, 415, 327, 191, 465, 23
];

function drawArea() {
    const svg = document.getElementById('areaChart');
    const labels = ['14:40:33', '14:50:33', '15:00:33', '15:10:33', '15:20:33', '15:30:33', '15:40:33'];
    const f = drawFrame(svg, 1200, labels.map((label, i) => ({ label, at: i / 6 })), 0);
    const step = (f.x1 - f.x0) / 60;
    const points = queries.map((v, i) => [f.x0 + i * step, f.y0 - v * f.scale]);
    const last = points[points.length - 1][0];
    add(svg, 'polygon', { fill: '#2ca1d9', 'fill-opacity': 0.7, points: `${f.x0},${f.y0} ${points.join(' ')} ${last},${f.y0}` });
    add(svg, 'polyline', { fill: 'none', stroke: '#2ca1d9', 'stroke-width': 2, points: points.join(' ') });
    drawAxis(svg, f, 1200);
    points.forEach(p => add(svg, 'circle', { cx: p[0], cy: p[1], r: 2.2, fill: '#fff', stroke: '#2ca1d9' }));
}

// Stacked queries per client: blue, yellow, pink, purple
const clients = [
    [90, 4, 30, 20], [160, 5, 60, 30], [130, 4, 50, 25], [80, 5, 30, 20], [75, 4, 30, 20], [100, 6, 40, 25],
    [140, 5, 40, 30], [130, 5, 40, 25], [90, 5, 30, 20], [80, 4, 25, 20], [90, 4, 30, 20], [95, 5, 30, 20],
    [100, 5, 30, 20], [60, 4, 25, 15], [45, 4, 20, 12], [70, 5, 25, 20], [70, 5, 25, 20], [85, 5, 30, 20],
    [90, 4, 30, 20], [65, 5, 25, 15], [60, 5, 25, 15], [70, 5, 25, 15], [45, 4, 20, 10], [45, 4, 18, 10],
    [60, 5, 25, 15], [140, 5, 50, 30], [82, 6, 44, 12], [134, 2, 65, 27], [60, 4, 18, 20], [77, 4, 21, 6],
    [102, 2, 30, 8], [58, 4, 27, 46], [44, 2, 23, 17], [61, 2, 33, 4], [29, 6, 23, 13], [75, 6, 15, 44],
    [60, 5, 21, 44], [46, 207, 23, 42], [36, 15, 31, 21], [48, 19, 13, 23], [54, 10, 79, 13], [128, 6, 80, 38],
    [132, 6, 44, 100], [82, 6, 15, 25], [163, 6, 33, 25], [100, 8, 42, 35], [65, 46, 31, 12], [157, 79, 13, 27],
    [90, 31, 27, 12], [220, 152, 54, 67], [163, 6, 15, 21], [171, 0, 44, 84], [117, 0, 21, 12], [159, 0, 88, 29],
    [153, 0, 63, 36], [205, 6, 48, 48], [151, 0, 17, 33], [105, 0, 15, 17], [98, 0, 33, 31], [123, 0, 15, 6],
    [105, 0, 29, 10], [59, 0, 29, 17], [98, 0, 17, 17], [69, 0, 23, 19], [86, 0, 10, 25], [94, 0, 6, 25],
    [126, 0, 12, 17], [339, 0, 25, 38], [376, 0, 13, 29], [241, 0, 13, 15], [818, 0, 15, 40], [218, 0, 54, 17],
    [523, 0, 40, 239], [115, 0, 25, 146], [77, 0, 12, 65], [82, 0, 12, 31], [245, 0, 8, 19], [186, 0, 12, 21],
    [207, 0, 15, 138], [222, 0, 17, 17], [291, 0, 25, 13], [165, 0, 15, 15], [88, 0, 8, 25], [146, 0, 27, 15],
    [272, 0, 29, 19]
];

function drawBars() {
    const svg = document.getElementById('barChart');
    const colors = ['#2ca1d9', '#ffdb66', '#ff7093', '#8378ea'];
    const slots = 88;
    const band = (svg.clientWidth - PLOT.left - PLOT.right) / slots;
    const labels = ['14:40:33', '14:50:48', '15:01:03', '15:11:18', '15:21:33', '15:31:48'];
    const f = drawFrame(svg, 1000, labels.map((label, i) => ({ label, at: i * 15 / slots })), band / 2);
    clients.forEach((stack, i) => {
        let y = f.y0;
        stack.forEach((v, c) => {
            const h = v * f.scale;
            y -= h;
            if (v) add(svg, 'rect', { x: f.x0 + i * band + 0.8, y, width: band - 1.6, height: h, fill: colors[c] });
        });
    });
    drawAxis(svg, f, 1000);
}

// Record types, as end angles in degrees
function drawPie() {
    const group = document.getElementById('pieSlices');
    const slices = [[230, '#2ca1d9'], [242, '#ffdb66'], [354, '#ff9f80'], [355, '#ff7093'], [358, '#e362b0'], [359.5, '#8378ea'], [360, '#38d6c4']];
    const point = deg => {
        const rad = (deg - 90) * Math.PI / 180;
        return `${196 + 78 * Math.cos(rad)} ${150 + 78 * Math.sin(rad)}`;
    };
    let start = 0;
    slices.forEach(([end, fill]) => {
        add(group, 'path', { fill, d: `M196 150L${point(start)}A78 78 0 ${end - start > 180 ? 1 : 0} 1 ${point(end)}z` });
        start = end;
    });
}

for (let i = 1; i < 8; i++) {
    add(document.getElementById('petals'), 'path', {
        d: document.getElementById('petal').getAttribute('d'),
        transform: `rotate(${i * 45})`
    });
}

function drawCharts() {
    document.getElementById('areaChart').innerHTML = '';
    document.getElementById('barChart').innerHTML = '';
    drawArea();
    drawBars();
}

drawPie();
drawCharts();
window.addEventListener('resize', drawCharts);
document.getElementById('dashboard').scrollTop = 97;
```
